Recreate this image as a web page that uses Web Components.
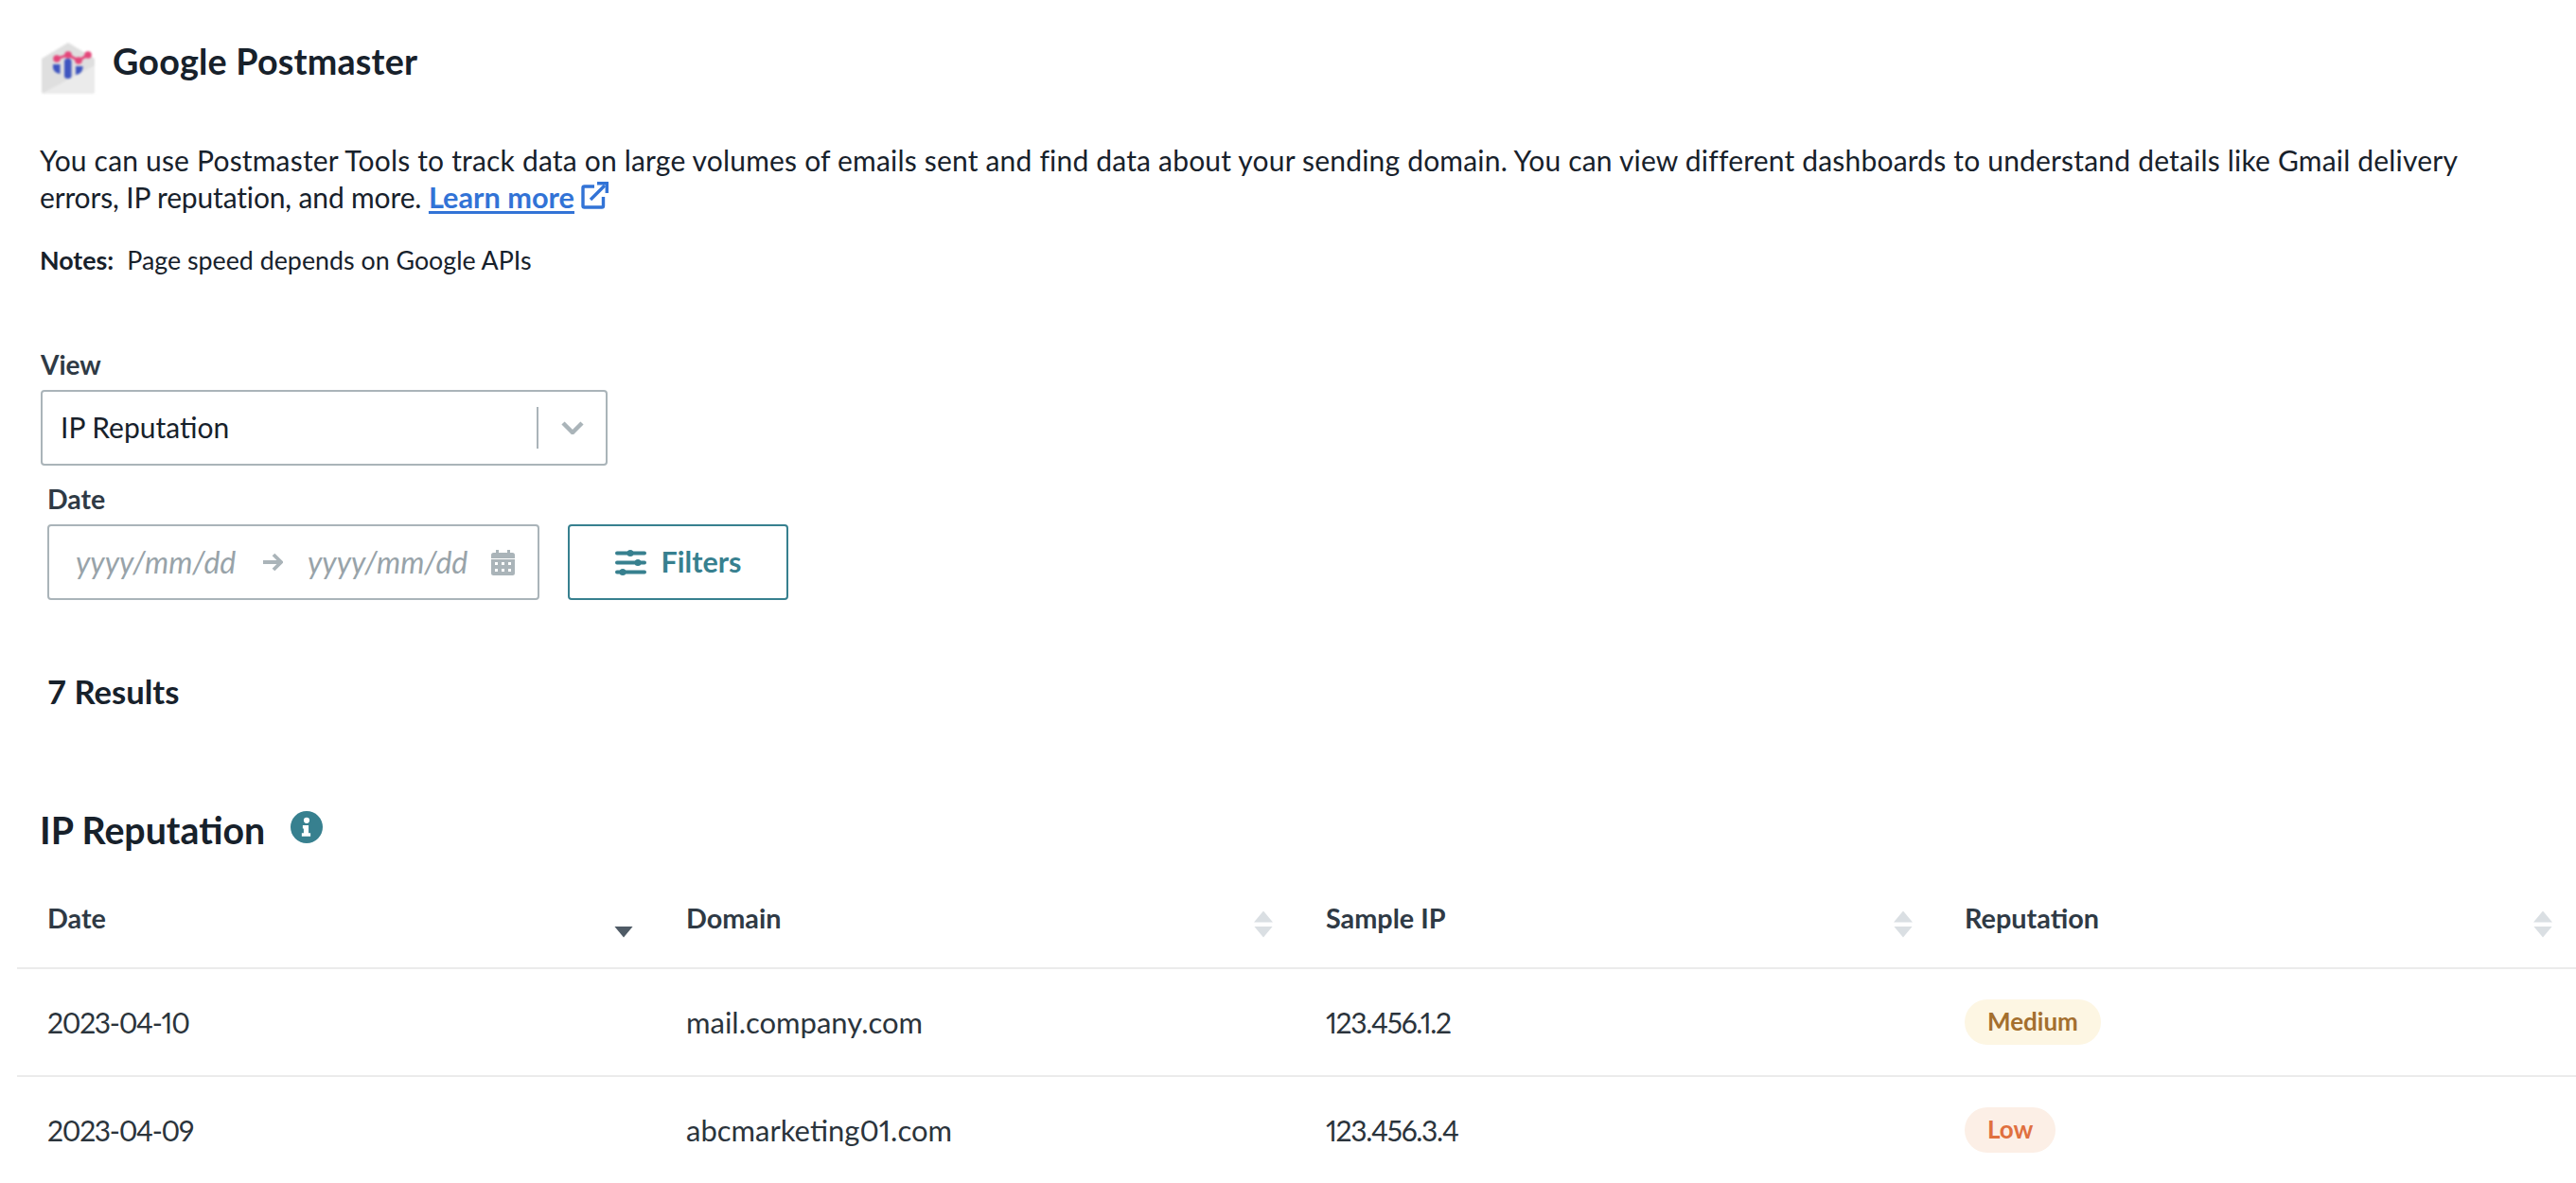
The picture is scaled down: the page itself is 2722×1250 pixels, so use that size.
<!DOCTYPE html>
<html lang="en"><head><meta charset="utf-8"><title>Google Postmaster</title>
<style>
html,body{margin:0;padding:0;background:#fff;height:1250px;overflow:hidden}
body{font-family:Lato,"Noto Sans",sans-serif;color:#17212b}
</style></head><body>
<gp-page>
  <gp-title>Google Postmaster</gp-title>
  <gp-intro><span slot="a">You can use Postmaster Tools to track data on large volumes of emails sent and find data about your sending domain. You can view different dashboards to understand details like Gmail delivery</span><span slot="b">errors, IP reputation, and more.</span></gp-intro>
  <gp-notes>Page speed depends on Google APIs</gp-notes>
  <gp-select label="View" value="IP Reputation"></gp-select>
  <gp-filters></gp-filters>
  <gp-results>7 Results</gp-results>
  <gp-heading>IP Reputation</gp-heading>
  <gp-table></gp-table>
</gp-page>
<script>
function def(name, css, html){
  customElements.define(name, class extends HTMLElement{
    connectedCallback(){
      if(this.shadowRoot) return;
      const r=this.attachShadow({mode:'open'});
      r.innerHTML='<style>'+css+'</style>'+(typeof html==='function'?html(this):html);
    }
  });
}
def('gp-page',':host{display:flex;flex-direction:column;padding:44px 0 0 0;width:2722px;box-sizing:border-box}','<slot></slot>');
def('gp-title',`:host{display:flex;align-items:center;gap:18px;height:56px;margin-left:43px;font-size:37.700px;font-weight:700;letter-spacing:.2px;color:#17212b}
span{margin-bottom:15px}
svg{width:58px;height:56px;filter:blur(.8px);display:block}`,
`<svg viewBox="0 0 58 56"><path d="M1 18 L29 1 L57 18 V52 Q57 55 54 55 H4 Q1 55 1 52Z" fill="#dfdfdf"/><path d="M1 55 L57 25 V52 Q57 55 54 55Z" fill="#ebebeb"/>
<rect x="25" y="18" width="7.500" height="21" rx="3" fill="#3f55c0"/><path d="M13 24h7.500v10q-6.500-1-7.500-6zM37 26h7.500v2q-1 6-7.500 7z" fill="#3f55c0"/>
<path d="M17 18 L29 14 L40 20 L50 14" stroke="#e4467a" stroke-width="2.800" fill="none"/><g fill="#e4467a"><circle cx="17" cy="18" r="3.800"/><circle cx="29" cy="14" r="3.800"/><circle cx="40" cy="20" r="3.800"/><circle cx="50" cy="14" r="3.800"/></g></svg><span><slot></slot></span>`);
def('gp-intro',`:host{display:block;margin:50px 0 0 42px;font-size:30px;line-height:39px;color:#17212b}
.a{letter-spacing:.19px;white-space:nowrap}.b{white-space:nowrap}.b span{letter-spacing:-.15px}
a{color:#3273d6;font-weight:700;font-size:30.700px;text-decoration:underline;text-underline-offset:3px}
svg{width:29px;height:29px;vertical-align:-1px;margin-left:7px}`,
`<div class="a"><slot name="a"></slot></div><div class="b"><span><slot name="b"></slot></span> <a href="#">Learn more</a><svg viewBox="0 0 29 29" fill="none" stroke="#3273d6" stroke-width="3.400"><path d="M14 5H3.500Q2 5 2 6.500V25.500Q2 27 3.500 27H22Q23.500 27 23.500 25.500V16"/><path d="M10 19L25 4"/><path d="M17 1.700H27.300V12" /></svg></div>`);
def('gp-notes',`:host{display:flex;gap:14px;margin:30px 0 0 42px;font-size:26.800px;line-height:34px;color:#17212b}b{font-weight:700}`,
`<b>Notes:</b><span><slot></slot></span>`);
def('gp-select',`:host{display:block;margin:75px 0 0 43px;width:599px}
label{display:block;font-size:28px;font-weight:700;line-height:36px;color:#2f3a45;margin-bottom:9px}
.box{box-sizing:border-box;height:80px;border:2px solid #aab4b9;border-radius:4px;display:flex;align-items:center;padding:0 23px 0 19px;font-size:30px;color:#17212b}
.v{flex:1;margin-top:-2px}.d{width:2px;height:44px;background:#aab4b9;margin-right:24px}svg{width:24px;height:14px}`,
h=>`<label>${h.getAttribute('label')}</label><div class="box"><span class="v">${h.getAttribute('value')}</span><i class="d"></i><svg viewBox="0 0 24 14" fill="none" stroke="#aab4b9" stroke-width="4.500"><path d="M2 2l10 10L22 2"/></svg></div>`);
def('gp-filters',`:host{display:block;margin:18px 0 0 50px}
label{display:block;font-size:28.500px;font-weight:700;line-height:36px;color:#2f3a45;margin:-1px 0 9px}
.row{display:flex;gap:30px}
.date{box-sizing:border-box;width:520px;height:80px;border:2px solid #aab4b9;border-radius:4px;display:flex;align-items:center;padding:0 24px 0 28px;font-size:32px;font-style:italic;color:#98a3a9}
.date span{width:170px;margin-top:-2px;white-space:nowrap}.arrow{width:22px;height:20px;margin:0 26px 0 27px}.cal{width:25px;height:27px;margin-left:auto}
.btn{box-sizing:border-box;width:233px;height:80px;border:2px solid #37808f;border-radius:4px;display:flex;align-items:center;justify-content:center;gap:16px;font-size:30.500px;font-weight:700;color:#37808f}
.btn span{margin-top:-2px}.btn svg{width:33px;height:29px}`,
`<label>Date</label><div class="row"><div class="date"><span>yyyy/mm/dd</span>
<svg class="arrow" viewBox="0 0 22 20" fill="none" stroke="#aab4b9" stroke-width="3.800"><path d="M1 10h18M12 2l8 8-8 8"/></svg>
<span>yyyy/mm/dd</span>
<svg class="cal" viewBox="0 0 25 27"><path d="M5 0h3v3h9V0h3v3h2.500Q25 3 25 5.500V9H0V5.500Q0 3 2.500 3H5z" fill="#aab4b9"/><path fill-rule="evenodd" fill="#aab4b9" d="M0 10h25v14.500Q25 27 22.500 27h-20Q0 27 0 24.500zM4 13v3h3v-3zM11 13v3h3v-3zM18 13v3h3v-3zM4 20v3h3v-3zM11 20v3h3v-3zM18 20v3h3v-3z"/></svg></div>
<div class="btn"><svg viewBox="0 0 33 29" fill="#37808f"><rect y="2.500" width="33" height="4" rx="2"/><circle cx="16" cy="4.500" r="3.500"/><rect y="12.500" width="33" height="4" rx="2"/><circle cx="24" cy="14.500" r="3.500"/><rect y="22.500" width="33" height="4" rx="2"/><circle cx="8" cy="24.500" r="3.500"/></svg><span>Filters</span></div></div>`);
def('gp-results',`:host{display:block;margin:75px 0 0 50px;font-size:34.600px;font-weight:700;line-height:44px;color:#17212b}`,`<slot></slot>`);
def('gp-heading',`:host{display:flex;align-items:center;gap:27px;margin:100px 0 0 42px;height:48px;font-size:39.300px;font-weight:700;color:#17212b}
span{margin-top:-2px}svg{width:34px;height:34px;margin-top:-6px}`,
`<span><slot></slot></span><svg viewBox="0 0 33 33"><circle cx="16.500" cy="16.500" r="16.500" fill="#37808f"/><circle cx="16.500" cy="9.500" r="3" fill="#fff"/><path d="M12.500 14.500h6v8h2v3.500h-9v-3.500h2v-4.500h-1z" fill="#fff"/></svg>`);
def('gp-sort',`:host{display:flex;flex-direction:column;gap:4px;width:20px;margin-top:9px}
i{display:block;width:20px;height:12px}
.u{clip-path:polygon(50% 0,100% 100%,0 100%);background:var(--u,#dadfe3)}
.d{clip-path:polygon(0 0,100% 0,50% 100%);background:var(--d,#dadfe3)}`,
`<i class="u"></i><i class="d"></i>`);
def('gp-pill',`:host{display:inline-flex;align-items:center;height:48px;padding:0 24px;border-radius:24px;font-size:26px;font-weight:700;background:var(--bg);color:var(--fg)}
span{margin-top:-2px}`,`<span><slot></slot></span>`);
const cols=['Date','Domain','Sample IP','Reputation'];
const rows=[['2023-04-10','mail.company.com','123.456.1.2','Medium'],['2023-04-09','abcmarketing01.com','123.456.3.4','Low']];
const pill={Medium:'--bg:#fdf6e3;--fg:#a46f2e',Low:'--bg:#fcefe6;--fg:#e0703f'};
def('gp-table',`:host{display:block;margin:21px 0 0 18px;width:2704px}
.r{display:grid;grid-template-columns:repeat(4,676px);box-sizing:border-box;border-bottom:2px solid #ebebeb;height:114px;align-items:center}
.h{height:102px}
.c{padding:0 25px 0 31px;display:flex;justify-content:space-between;align-items:center;font-size:31px;color:#2b343c}
.c:first-child{padding-left:32px}.c:last-child{padding-left:30px}
.c>span{margin-top:-1px;font-variant-numeric:proportional-nums}
.n{font-size:30px;letter-spacing:-1.300px}
.h .c{font-size:28.800px;font-weight:700;color:#2f3a45}
.h .c>span{margin-top:-4px}`,
`<div class="r h">${cols.map((c,i)=>`<div class="c"><span>${c}</span><gp-sort style="${i==0?'--u:transparent;--d:#4f5b66':''}"></gp-sort></div>`).join('')}</div>`+
rows.map(r=>`<div class="r">${r.map((c,i)=>`<div class="c">${i==3?`<gp-pill style="${pill[c]}">${c}</gp-pill>`:`<span class="${i==1?'':'n'}">${c}</span>`}</div>`).join('')}</div>`).join(''));
</script>
</body></html>
